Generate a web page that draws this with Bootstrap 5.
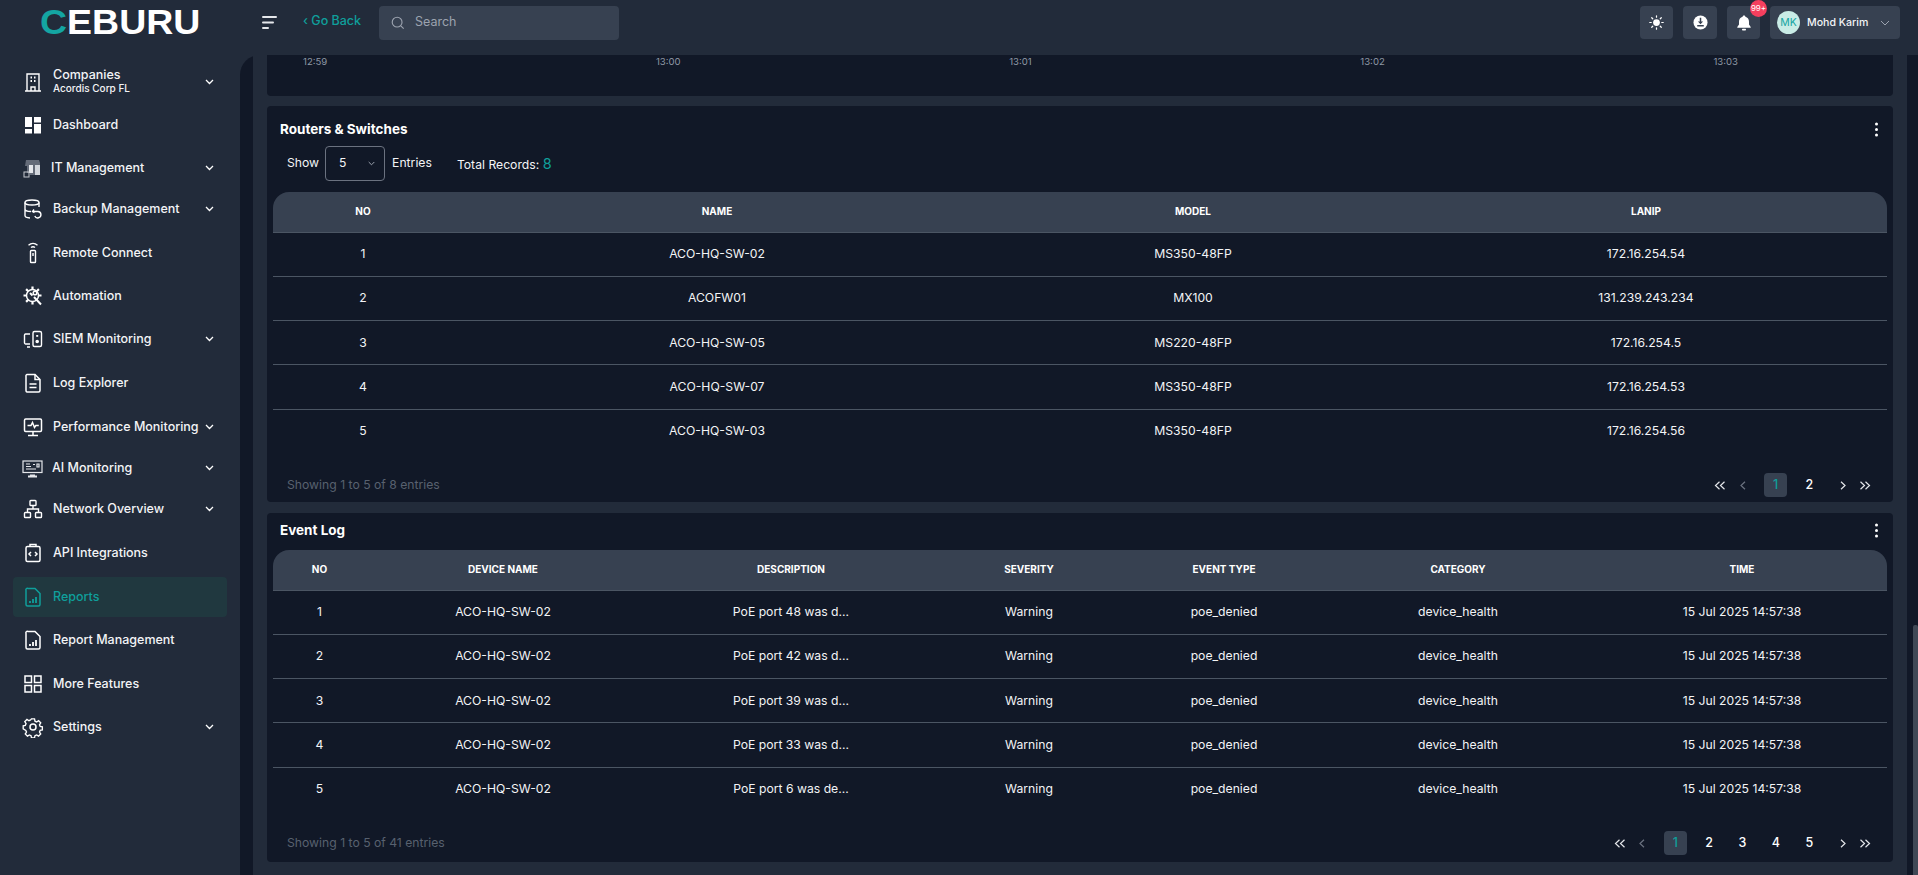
<!DOCTYPE html>
<html lang="en">
<head>
<meta charset="utf-8">
<title>Ceburu Reports</title>
<link href="https://cdn.jsdelivr.net/npm/bootstrap@5.3.0/dist/css/bootstrap.min.css" rel="stylesheet">
<style>
:root{--panel:#222b3a;--ink:#111827;--chip:#374151;--teal:#0f9f9b;--line:#4b5563;}
html,body{height:100%;}
body{background:var(--panel);color:#f3f4f6;font-family:Inter,"Noto Sans",sans-serif;font-size:12.5px;overflow:hidden;}
.shell{height:875px;}
.topbar{height:55px;background:var(--panel);flex:none;padding-bottom:10px;}
.brand-box{width:240px;padding-left:40px;}
.brand-box svg{display:block;}
.brand-text{font-family:"Liberation Sans",sans-serif;font-weight:700;font-size:20px;fill:#fff;}
.brand-c{fill:#14a5a2;}
.burger{margin-left:22px;width:15px;height:15px;}
.goback{margin-left:26px;margin-top:-3px;color:var(--teal);font-size:12.5px;font-weight:500;text-decoration:none;width:76px;}
.searchbox{width:240px;height:34px;background:var(--chip);border-radius:4px;padding-left:12px;color:#9ca3af;font-size:12.5px;gap:10px;}
.tool-row{gap:10px;}
.tool-btn{width:33px;height:33px;background:var(--chip);border-radius:4px;}
.tool-btn.wide{width:34px;}
.alert-pill{position:absolute;top:-6px;left:23px;width:17px;height:17px;border-radius:50%;background:#f43f5e;color:#fff;font-size:8px;line-height:17px;text-align:center;}
.user-chip{width:130px;height:33px;background:var(--chip);border-radius:4px;padding:0 10px 0 7px;margin-right:18px;font-size:10.6px;font-weight:500;}
.avatar{width:23px;height:23px;border-radius:50%;background:#c9ece6;color:#14a5a2;font-size:10.5px;line-height:23px;text-align:center;margin-right:7px;font-weight:400;flex:none;}
.rail{width:240px;flex:none;padding:5px 13px 0;}
.rail-item{height:40px;margin-bottom:3px;border-radius:4px;padding:0 13px 0 9px;color:#f3f4f6;text-decoration:none;font-size:12.5px;font-weight:500;white-space:nowrap;}
.rail-item.top-item{height:43px;margin-bottom:2px;}
.rail-item.near{margin-bottom:1px;}
.rail-item.far{margin-bottom:4px;}
.rail-item svg.ic{width:22px;height:22px;flex:none;margin-right:9px;}
.rail-item .sub{font-size:10px;line-height:13px;display:block;}
.rail-item .two{line-height:15px;margin-top:-2px;}
.rail-item.on{background:#20383f;color:var(--teal);}
.rail-item .chev{margin-left:auto;flex:none;}
.label-it{margin-left:-2px;}
.label-ai{margin-left:-1px;}
.work{background:var(--ink);border-top-left-radius:20px;padding-left:13px;min-width:0;position:relative;}
.thumb{position:absolute;right:0;top:570px;width:5px;height:250px;background:#3f4855;border-radius:2px 2px 0 0;}
.work-inner{background:var(--panel);margin-right:11px;padding:0 14px;height:820px;overflow:hidden;}
.pane{background:var(--ink);border-radius:4px;margin-bottom:10px;}
.pane-chart{height:41px;border-radius:0 0 4px 4px;padding:0 155px 0 36px;color:#8e97a4;font-size:9.6px;line-height:13px;}
.pane-routers{height:396px;padding:13px 6px 0;margin-bottom:11px;}
.pane-events{height:349px;padding:7px 6px 0;}
.pane-title{font-size:13.5px;font-weight:700;line-height:20px;color:#fff;padding:0 0 0 7px;margin:0;}
.kebab{width:3px;margin-right:9px;height:15px;}
.kebab svg{display:block;}
.show-row{margin:7px 0 11px 14px;height:35px;font-size:12.2px;}
.size-box{width:60px;height:35px;border:1px solid #6b7280;border-radius:4px;margin:0 7px 0 6px;padding:0 9px 0 13px;}
.records{margin-left:25px;}
.records b{color:var(--teal);font-size:14.5px;font-weight:400;}
.grid-table{table-layout:fixed;width:1614px;margin:0;--bs-table-bg:transparent;--bs-table-color:#f3f4f6;border-color:var(--line);}
.grid-table>:not(caption)>*>*{padding:0 8px;text-align:center;vertical-align:middle;border-bottom:1px solid var(--line);color:#f3f4f6;background:transparent;box-shadow:none;}
.grid-table thead th{height:40px;background:var(--chip);font-size:10px;font-weight:700;color:#fff;}
.grid-table thead th:first-child{border-top-left-radius:16px;}
.grid-table thead th:last-child{border-top-right-radius:16px;}
.grid-table tbody td{height:44.3px;font-size:12.2px;font-weight:400;}
.grid-table tbody tr:last-child td{border-bottom:0;}
.event-table{margin-top:10px;}
.r1{width:180px}.r2{width:528px}.r3{width:424px}.r4{width:482px}
.e1{width:93px}.e2{width:274px}.e3{width:302px}.e4{width:174px}.e5{width:216px}.e6{width:252px}.e7{width:303px}
.grid-table .e-time{padding-left:21px;}
.pane-foot{margin-top:20px;height:24px;padding-left:14px;color:#58616f;font-size:12.2px;}
.pager{margin:0 11px 0 0;--bs-pagination-bg:transparent;--bs-pagination-border-width:0;}
.pager .page-item .page-link{margin-left:0;width:33.4px;height:24px;padding:0;background:transparent;color:#fff;font-size:12.5px;line-height:24px;text-align:center;border:0;font-weight:500;box-shadow:none;display:flex;align-items:center;justify-content:center;}
.pager .page-item.current .page-link{background:var(--chip);color:var(--teal);width:23px;margin:0 5.5px 0 10px;border-radius:4px;}
.pager .page-item.arrow .page-link{width:22px;}
.pager .page-item.arrow.slim .page-link{width:23px;}
.pager .page-item.arrow.next .page-link{margin-left:5px;}
</style>
</head>
<body>
<div class="shell d-flex flex-column">
  <header class="topbar d-flex align-items-center">
    <div class="brand-box">
      <svg width="165" height="41" viewBox="0 0 88 24" preserveAspectRatio="none" role="img" aria-label="CEBURU"><text class="brand-text" x="0" y="19"><tspan class="brand-c">C</tspan>EBURU</text></svg>
    </div>
    <svg class="burger" viewBox="0 0 15 15" fill="#e5e7eb"><rect x="0" y="1" width="15" height="2" rx="1"/><rect x="0" y="6.5" width="12" height="2" rx="1"/><rect x="0" y="12" width="7" height="2" rx="1"/></svg>
    <a class="goback" href="#">‹ Go Back</a>
    <div class="searchbox d-flex align-items-center">
      <svg width="14" height="14" viewBox="0 0 16 16" fill="none" stroke="#9ca3af" stroke-width="1.3"><circle cx="7" cy="7" r="5.6"/><path d="M11.2 11.2 14.5 14.5"/></svg>
      <span>Search</span>
    </div>
    <div class="ms-auto d-flex align-items-center tool-row">
      <div class="tool-btn d-flex align-items-center justify-content-center">
        <svg width="15" height="15" viewBox="0 0 16 16" fill="#fff" stroke="#fff" stroke-width="1.3" stroke-linecap="round"><circle cx="8" cy="8" r="3.6" stroke="none"/><path d="M8 .8v1.6M8 13.6v1.6M.8 8h1.6M13.6 8h1.6M2.9 2.9 4 4M12 12l1.1 1.1M13.1 2.9 12 4M4 12l-1.1 1.1"/></svg>
      </div>
      <div class="tool-btn wide d-flex align-items-center justify-content-center">
        <svg width="15" height="15" viewBox="0 0 16 16"><circle cx="8" cy="8" r="7.5" fill="#fff"/><path d="M7.200 3h1.600v3.800h2L8 9.800 5.200 6.800h2zM4.500 10.600h7v1.600h-7z" fill="#374151"/></svg>
      </div>
      <div class="tool-btn position-relative d-flex align-items-center justify-content-center">
        <svg width="14" height="16" viewBox="0 0 14 16" fill="#fff"><path d="M7 0.6c.8 0 1.3.5 1.4 1.1C10.700 2.300 12 4.300 12 6.700v2.800l1.700 2.600v.6H.3v-.6L2 9.500V6.700c0-2.400 1.300-4.400 3.600-5C5.700 1.100 6.200.6 7 .6z"/><rect x="5" y="13.800" width="4" height="1.800" rx=".8"/></svg>
        <span class="alert-pill">99+</span>
      </div>
      <div class="user-chip d-flex align-items-center">
        <span class="avatar">MK</span><span>Mohd Karim</span>
        <svg class="ms-auto" width="10" height="6" viewBox="0 0 10 6" fill="none" stroke="#9ca3af" stroke-width="1"><path d="M1 1l4 4 4-4"/></svg>
      </div>
    </div>
  </header>

  <div class="d-flex flex-grow-1 overflow-hidden">
    <nav class="rail">
      <a class="rail-item top-item d-flex align-items-center" href="#">
        <svg class="ic" viewBox="0 0 22 22" fill="none" stroke="#fff" stroke-width="1.4"><path d="M5 20V3h12v17M3 20h16"/><path d="M9 20v-4h4v4"/><path d="M8.500 6.500h1.500M12 6.500h1.500M8.500 10h1.500M12 10h1.500" stroke-width="1.800"/></svg>
        <span class="two">Companies<span class="sub">Acordis Corp FL</span></span>
        <svg class="chev" width="9" height="6" viewBox="0 0 9 6" fill="none" stroke="#fff" stroke-width="1.300"><path d="M1 1l3.500 3.500L8 1"/></svg>
      </a>
      <a class="rail-item d-flex align-items-center" href="#">
        <svg class="ic" viewBox="0 0 22 22" fill="#fff"><rect x="3" y="3" width="7" height="10"/><rect x="12" y="3" width="7" height="5.500"/><rect x="12" y="10" width="7" height="9.500"/><rect x="3" y="15" width="7" height="4.500"/></svg>
        <span>Dashboard</span>
      </a>
      <a class="rail-item near d-flex align-items-center" href="#">
        <svg class="ic" viewBox="0 0 22 22" fill="#9aa1ab"><path d="M4 3h13l1 3v12H8v-2H5V9H3z" opacity=".55"/><rect x="7" y="8" width="4" height="8" fill="#e5e7eb"/><rect x="13" y="8" width="5" height="10" fill="#d1d5db"/><rect x="2" y="15" width="5" height="5" fill="none" stroke="#c5c9cf"/></svg>
        <span class="label-it">IT Management</span>
        <svg class="chev" width="9" height="6" viewBox="0 0 9 6" fill="none" stroke="#fff" stroke-width="1.300"><path d="M1 1l3.500 3.500L8 1"/></svg>
      </a>
      <a class="rail-item far d-flex align-items-center" href="#">
        <svg class="ic" viewBox="0 0 22 22" fill="none" stroke="#fff" stroke-width="1.400"><ellipse cx="10" cy="4.500" rx="7" ry="2.500"/><path d="M3 4.500v13c0 1.300 2.500 2.300 5 2.500M17 4.500V9M3 11c0 1.300 2.500 2.500 6 2.500"/><path d="M12 11.500l-1.500 2 2 1.200M11 13.500h5a3.200 3.200 0 1 1-3.200 4.500"/></svg>
        <span>Backup Management</span>
        <svg class="chev" width="9" height="6" viewBox="0 0 9 6" fill="none" stroke="#fff" stroke-width="1.300"><path d="M1 1l3.500 3.500L8 1"/></svg>
      </a>
      <a class="rail-item d-flex align-items-center" href="#">
        <svg class="ic" viewBox="0 0 22 22" fill="none" stroke="#fff" stroke-width="1.400"><rect x="8.500" y="8.500" width="5" height="12" rx=".8"/><rect x="10.300" y="11" width="1.400" height="3" fill="#fff" stroke="none"/><path d="M9 5.500a3.200 3.200 0 0 1 4 0M6.500 3.200a7 7 0 0 1 9 0"/></svg>
        <span>Remote Connect</span>
      </a>
      <a class="rail-item d-flex align-items-center" href="#">
        <svg class="ic" viewBox="0 0 22 22" fill="none" stroke="#fff" stroke-width="1.500"><circle cx="10.500" cy="10.500" r="6"/><path d="M10.500 1.500v3M10.500 16.500v3M1.500 10.500h3M16.500 10.500h3M4.100 4.100l2.100 2.100M16.900 4.100l-2.100 2.100M4.100 16.900l2.100-2.100" stroke-width="2.200"/><path d="M8 8l2.500 2.500M12 12l7 7.500" stroke-width="2"/><circle cx="13" cy="8" r="1.800"/></svg>
        <span>Automation</span>
      </a>
      <a class="rail-item far d-flex align-items-center" href="#">
        <svg class="ic" viewBox="0 0 22 22" fill="none" stroke="#fff" stroke-width="1.400"><path d="M8 6H3.500A1.200 1.200 0 0 0 2.500 7v8a1.200 1.200 0 0 0 1 1H8M5 19h3"/><rect x="11" y="3.500" width="8.500" height="15" rx="1.500"/><circle cx="15.200" cy="13.500" r="1.100" fill="#fff"/><path d="M15.200 7v1.800" stroke-width="2"/></svg>
        <span>SIEM Monitoring</span>
        <svg class="chev" width="9" height="6" viewBox="0 0 9 6" fill="none" stroke="#fff" stroke-width="1.300"><path d="M1 1l3.500 3.500L8 1"/></svg>
      </a>
      <a class="rail-item far d-flex align-items-center" href="#">
        <svg class="ic" viewBox="0 0 22 22" fill="none" stroke="#fff" stroke-width="1.500"><path d="M5 2.500h8l5 5v11a1.500 1.500 0 0 1-1.500 1.500h-11.500A1.500 1.500 0 0 1 4 18.500v-14A1.500 1.500 0 0 1 5 2.500z"/><path d="M13 2.500v5h5M7.500 12h7M7.500 15.500h7"/></svg>
        <span>Log Explorer</span>
      </a>
      <a class="rail-item near d-flex align-items-center" href="#">
        <svg class="ic" viewBox="0 0 22 22" fill="none" stroke="#fff" stroke-width="1.500"><rect x="2.500" y="3" width="17" height="12.500" rx="1.200"/><path d="M5.500 9.500h3.500l1.500-3 2 5 1.300-2h3M11 15.500v4M6 19.500h10" /></svg>
        <span>Performance Monitoring</span>
        <svg class="chev" width="9" height="6" viewBox="0 0 9 6" fill="none" stroke="#fff" stroke-width="1.300"><path d="M1 1l3.500 3.500L8 1"/></svg>
      </a>
      <a class="rail-item near d-flex align-items-center" href="#">
        <svg class="ic" viewBox="0 0 22 22" fill="none" stroke="#e5e7eb" stroke-width="1.200"><rect x="1" y="4" width="19" height="11.500"/><path d="M4 7h4M4 9.500h5M4 12h10M11 7.500h2M15 7h2v3h-2z"/><path d="M8 18.500h5M6 19.500h9" stroke-width="1.800"/></svg>
        <span class="label-ai">AI Monitoring</span>
        <svg class="chev" width="9" height="6" viewBox="0 0 9 6" fill="none" stroke="#fff" stroke-width="1.300"><path d="M1 1l3.500 3.500L8 1"/></svg>
      </a>
      <a class="rail-item far d-flex align-items-center" href="#">
        <svg class="ic" viewBox="0 0 22 22" fill="none" stroke="#fff" stroke-width="1.400"><rect x="8" y="2.500" width="6" height="5" rx=".8"/><rect x="2.500" y="14.500" width="6" height="5" rx=".8"/><rect x="13.500" y="14.500" width="6" height="5" rx=".8"/><path d="M11 7.500V11M5.500 14.500V11h11v3.500"/></svg>
        <span>Network Overview</span>
        <svg class="chev" width="9" height="6" viewBox="0 0 9 6" fill="none" stroke="#fff" stroke-width="1.300"><path d="M1 1l3.500 3.500L8 1"/></svg>
      </a>
      <a class="rail-item far d-flex align-items-center" href="#">
        <svg class="ic" viewBox="0 0 22 22" fill="none" stroke="#fff" stroke-width="1.500"><rect x="4" y="4.500" width="14" height="15" rx="1.500"/><path d="M8 4.500V2.500h6v2M9 10l-2 2 2 2M13 10l2 2-2 2"/></svg>
        <span>API Integrations</span>
      </a>
      <a class="rail-item on d-flex align-items-center" href="#">
        <svg class="ic" viewBox="0 0 22 22" fill="none" stroke="#0f9f9b" stroke-width="1.500"><path d="M6 2.500h7l5 5v11a1.500 1.500 0 0 1-1.500 1.500h-11A1.500 1.500 0 0 1 4 18.500v-14a1.500 1.500 0 0 1 2-2z"/><path d="M8 17v-2M11 17v-4M14 17v-6" stroke-width="1.800"/></svg>
        <span>Reports</span>
      </a>
      <a class="rail-item far d-flex align-items-center" href="#">
        <svg class="ic" viewBox="0 0 22 22" fill="none" stroke="#fff" stroke-width="1.500"><path d="M6 2.500h7l5 5v11a1.500 1.500 0 0 1-1.500 1.500h-11A1.500 1.500 0 0 1 4 18.500v-14a1.500 1.500 0 0 1 2-2z"/><path d="M8 17v-2M11 17v-4M14 17v-6" stroke-width="1.800"/></svg>
        <span>Report Management</span>
      </a>
      <a class="rail-item d-flex align-items-center" href="#">
        <svg class="ic" viewBox="0 0 22 22" fill="none" stroke="#fff" stroke-width="1.500"><rect x="3" y="3" width="6.500" height="6.500"/><rect x="12.500" y="3" width="6.500" height="6.500"/><rect x="3" y="12.500" width="6.500" height="6.500"/><rect x="12.500" y="12.500" width="6.500" height="6.500"/></svg>
        <span>More Features</span>
      </a>
      <a class="rail-item d-flex align-items-center" href="#">
        <svg class="ic" viewBox="0 0 22 22" fill="none" stroke="#fff" stroke-width="1.500"><circle cx="11" cy="11" r="3"/><path d="M9.300 2h3.400l.5 2.600 1.800.8 2.200-1.400 2.400 2.400-1.400 2.200.8 1.800 2.400.5v3.400l-2.400.5-.8 1.800 1.400 2.200-2.400 2.400-2.200-1.400-1.800.8-.5 2.400H9.300l-.5-2.400-1.800-.8-2.200 1.400-2.400-2.400 1.400-2.200-.8-1.800L.1 13V9.600l2.400-.5.8-1.800L1.900 5l2.400-2.400 2.200 1.400 1.800-.8z" transform="translate(1.100 1.100) scale(.9)"/></svg>
        <span>Settings</span>
        <svg class="chev" width="9" height="6" viewBox="0 0 9 6" fill="none" stroke="#fff" stroke-width="1.300"><path d="M1 1l3.500 3.500L8 1"/></svg>
      </a>
    </nav>

    <main class="work flex-grow-1">
      <div class="thumb"></div>
      <div class="work-inner">
        <section class="pane pane-chart d-flex justify-content-between">
          <span>12:59</span><span>13:00</span><span>13:01</span><span>13:02</span><span>13:03</span>
        </section>

        <section class="pane pane-routers">
          <div class="d-flex align-items-center justify-content-between">
            <h2 class="pane-title">Routers &amp; Switches</h2>
            <div class="kebab"><svg width="3" height="15" viewBox="0 0 3 15" fill="#fff"><circle cx="1.500" cy="2" r="1.500"/><circle cx="1.500" cy="7.500" r="1.500"/><circle cx="1.500" cy="13" r="1.500"/></svg></div>
          </div>
          <div class="show-row d-flex align-items-center">
            <span>Show</span>
            <div class="size-box d-flex align-items-center justify-content-between"><span>5</span><svg width="7" height="5" viewBox="0 0 7 5" fill="none" stroke="#9ca3af"><path d="M.7 1l2.800 2.800L6.300 1"/></svg></div>
            <span>Entries</span>
            <span class="records">Total Records: <b>8</b></span>
          </div>
          <table class="table grid-table">
            <colgroup><col class="r1"><col class="r2"><col class="r3"><col class="r4"></colgroup>
            <thead><tr><th>NO</th><th>NAME</th><th>MODEL</th><th>LANIP</th></tr></thead>
            <tbody>
              <tr><td>1</td><td>ACO-HQ-SW-02</td><td>MS350-48FP</td><td>172.16.254.54</td></tr>
              <tr><td>2</td><td>ACOFW01</td><td>MX100</td><td>131.239.243.234</td></tr>
              <tr><td>3</td><td>ACO-HQ-SW-05</td><td>MS220-48FP</td><td>172.16.254.5</td></tr>
              <tr><td>4</td><td>ACO-HQ-SW-07</td><td>MS350-48FP</td><td>172.16.254.53</td></tr>
              <tr><td>5</td><td>ACO-HQ-SW-03</td><td>MS350-48FP</td><td>172.16.254.56</td></tr>
            </tbody>
          </table>
          <div class="pane-foot d-flex align-items-center justify-content-between">
            <span>Showing 1 to 5 of 8 entries</span>
            <ul class="pagination pager">
              <li class="page-item arrow"><a class="page-link" href="#" aria-label="First"><svg width="12" height="9" viewBox="0 0 12 9" fill="none" stroke="#e5e7eb" stroke-width="1.200"><path d="M5.500.8 1.500 4.500l4 3.700M10.500.8l-4 3.700 4 3.700"/></svg></a></li>
              <li class="page-item arrow slim"><a class="page-link" href="#" aria-label="Previous"><svg width="6" height="9" viewBox="0 0 6 9" fill="none" stroke="#6b7280" stroke-width="1.200"><path d="M5 .8 1 4.500l4 3.700"/></svg></a></li>
              <li class="page-item current"><a class="page-link" href="#">1</a></li>
              <li class="page-item"><a class="page-link" href="#">2</a></li>
              <li class="page-item arrow slim next"><a class="page-link" href="#" aria-label="Next"><svg width="6" height="9" viewBox="0 0 6 9" fill="none" stroke="#e5e7eb" stroke-width="1.200"><path d="M1 .8l4 3.700-4 3.700"/></svg></a></li>
              <li class="page-item arrow"><a class="page-link" href="#" aria-label="Last"><svg width="12" height="9" viewBox="0 0 12 9" fill="none" stroke="#e5e7eb" stroke-width="1.200"><path d="M1.500.8l4 3.700-4 3.700M6.500.8l4 3.700-4 3.700"/></svg></a></li>
            </ul>
          </div>
        </section>

        <section class="pane pane-events">
          <div class="d-flex align-items-center justify-content-between">
            <h2 class="pane-title">Event Log</h2>
            <div class="kebab"><svg width="3" height="15" viewBox="0 0 3 15" fill="#fff"><circle cx="1.500" cy="2" r="1.500"/><circle cx="1.500" cy="7.500" r="1.500"/><circle cx="1.500" cy="13" r="1.500"/></svg></div>
          </div>
          <table class="table grid-table event-table">
            <colgroup><col class="e1"><col class="e2"><col class="e3"><col class="e4"><col class="e5"><col class="e6"><col class="e7"></colgroup>
            <thead><tr><th>NO</th><th>DEVICE NAME</th><th>DESCRIPTION</th><th>SEVERITY</th><th>EVENT TYPE</th><th>CATEGORY</th><th class="e-time">TIME</th></tr></thead>
            <tbody>
              <tr><td>1</td><td>ACO-HQ-SW-02</td><td>PoE port 48 was d...</td><td>Warning</td><td>poe_denied</td><td>device_health</td><td class="e-time">15 Jul 2025 14:57:38</td></tr>
              <tr><td>2</td><td>ACO-HQ-SW-02</td><td>PoE port 42 was d...</td><td>Warning</td><td>poe_denied</td><td>device_health</td><td class="e-time">15 Jul 2025 14:57:38</td></tr>
              <tr><td>3</td><td>ACO-HQ-SW-02</td><td>PoE port 39 was d...</td><td>Warning</td><td>poe_denied</td><td>device_health</td><td class="e-time">15 Jul 2025 14:57:38</td></tr>
              <tr><td>4</td><td>ACO-HQ-SW-02</td><td>PoE port 33 was d...</td><td>Warning</td><td>poe_denied</td><td>device_health</td><td class="e-time">15 Jul 2025 14:57:38</td></tr>
              <tr><td>5</td><td>ACO-HQ-SW-02</td><td>PoE port 6 was de...</td><td>Warning</td><td>poe_denied</td><td>device_health</td><td class="e-time">15 Jul 2025 14:57:38</td></tr>
            </tbody>
          </table>
          <div class="pane-foot d-flex align-items-center justify-content-between">
            <span>Showing 1 to 5 of 41 entries</span>
            <ul class="pagination pager">
              <li class="page-item arrow"><a class="page-link" href="#" aria-label="First"><svg width="12" height="9" viewBox="0 0 12 9" fill="none" stroke="#e5e7eb" stroke-width="1.200"><path d="M5.500.8 1.500 4.500l4 3.700M10.500.8l-4 3.700 4 3.700"/></svg></a></li>
              <li class="page-item arrow slim"><a class="page-link" href="#" aria-label="Previous"><svg width="6" height="9" viewBox="0 0 6 9" fill="none" stroke="#6b7280" stroke-width="1.200"><path d="M5 .8 1 4.500l4 3.700"/></svg></a></li>
              <li class="page-item current"><a class="page-link" href="#">1</a></li>
              <li class="page-item"><a class="page-link" href="#">2</a></li>
              <li class="page-item"><a class="page-link" href="#">3</a></li>
              <li class="page-item"><a class="page-link" href="#">4</a></li>
              <li class="page-item"><a class="page-link" href="#">5</a></li>
              <li class="page-item arrow slim next"><a class="page-link" href="#" aria-label="Next"><svg width="6" height="9" viewBox="0 0 6 9" fill="none" stroke="#e5e7eb" stroke-width="1.200"><path d="M1 .8l4 3.700-4 3.700"/></svg></a></li>
              <li class="page-item arrow"><a class="page-link" href="#" aria-label="Last"><svg width="12" height="9" viewBox="0 0 12 9" fill="none" stroke="#e5e7eb" stroke-width="1.200"><path d="M1.500.8l4 3.700-4 3.700M6.500.8l4 3.700-4 3.700"/></svg></a></li>
            </ul>
          </div>
        </section>
      </div>
    </main>
  </div>
</div>
</body>
</html>
